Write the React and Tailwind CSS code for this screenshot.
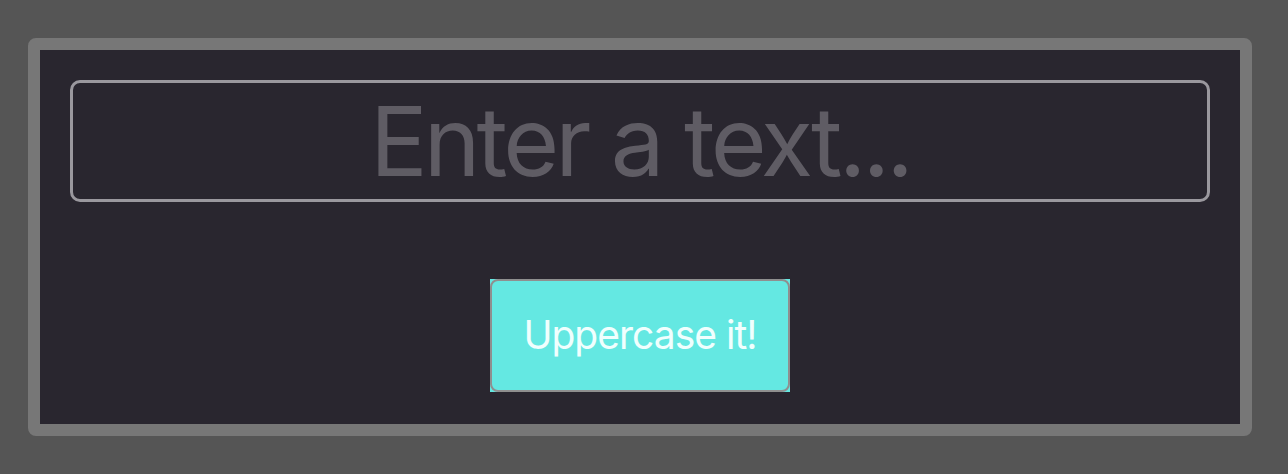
import { useState } from "react";

export default function App() {
  const [text, setText] = useState("");

  return (
    <div className="min-h-screen bg-[#555555] p-[38px_36px_38px_28px] font-['Inter',sans-serif]">
      <div className="w-[1224px] rounded-[8px] border-[12px] border-[#777777] bg-[#29262f] px-[30px] pt-[30px] pb-[32px] flex flex-col items-center gap-[77px]">
        <input
          type="text"
          value={text}
          onChange={(e) => setText(e.target.value)}
          placeholder="Enter a text..."
          className="w-full h-[122px] rounded-[10px] border-[3px] border-[#9a989e] bg-transparent text-center text-[96px] tracking-[-0.04em] text-[#e8e8ea] placeholder:text-[#5f5c64] outline-none"
        />
        <div className="bg-[#64e8e2]">
          <button
            onClick={() => setText(text.toUpperCase())}
            className="block w-[300px] h-[113px] rounded-[8px] border-2 border-[#8f8f8f] bg-[#64e8e2] text-[39px] tracking-[-0.025em] text-[#f0fffe]"
          >
            Uppercase it!
          </button>
        </div>
      </div>
    </div>
  );
}
